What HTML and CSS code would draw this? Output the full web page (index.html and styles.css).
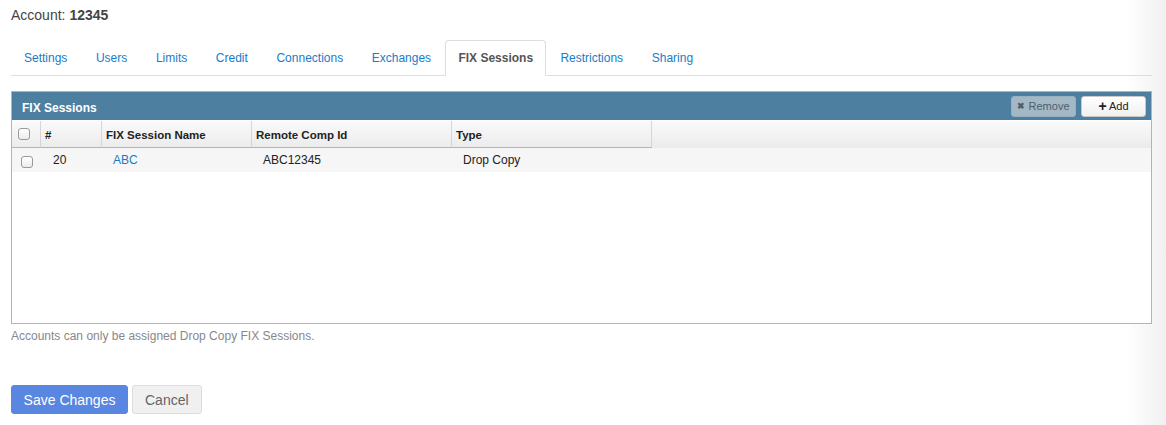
FILE: index.html
```html
<!DOCTYPE html>
<html lang="en">
<head>
    <meta charset="UTF-8">
    <title>Account 12345 - FIX Sessions</title>
    <link rel="stylesheet" href="styles.css">
</head>
<body>
    <div class="page">
        <h1 class="account">Account: <b>12345</b></h1>

        <ul class="tabs">
            <li><a href="#">Settings</a></li>
            <li><a href="#">Users</a></li>
            <li><a href="#">Limits</a></li>
            <li><a href="#">Credit</a></li>
            <li><a href="#">Connections</a></li>
            <li><a href="#">Exchanges</a></li>
            <li class="active"><a href="#">FIX Sessions</a></li>
            <li><a href="#">Restrictions</a></li>
            <li><a href="#">Sharing</a></li>
        </ul>

        <div class="panel">
            <div class="panel-head">
                <span class="panel-title">FIX Sessions</span>
                <div class="panel-tools">
                    <button class="tool-btn disabled"><span class="ico">&#10006;</span> Remove</button>
                    <button class="tool-btn"><span class="ico plus">+</span> Add</button>
                </div>
            </div>
            <div class="grid">
                <div class="grid-head">
                    <div class="cell c-check"><span class="check"></span></div>
                    <div class="cell c-num">#</div>
                    <div class="cell c-name">FIX Session Name</div>
                    <div class="cell c-comp">Remote Comp Id</div>
                    <div class="cell c-type">Type</div>
                </div>
                <div class="grid-row">
                    <div class="cell c-check"><span class="check"></span></div>
                    <div class="cell c-num">20</div>
                    <div class="cell c-name"><a href="#">ABC</a></div>
                    <div class="cell c-comp">ABC12345</div>
                    <div class="cell c-type">Drop Copy</div>
                </div>
            </div>
        </div>

        <p class="hint">Accounts can only be assigned Drop Copy FIX Sessions.</p>

        <div class="actions">
            <button class="btn primary">Save Changes</button>
            <button class="btn">Cancel</button>
        </div>
    </div>
</body>
</html>
```

FILE: styles.css
```css
* {
    margin: 0;
    padding: 0;
    box-sizing: border-box;
}

body {
    font-family: "Liberation Sans", Arial, sans-serif;
    color: #333;
    background: linear-gradient(to right, #fff 1126px, #f0f0f0 1166px);
    height: 425px;
    overflow: hidden;
}

.page {
    width: 1141px;
    margin-left: 11px;
}

a {
    color: #1a7bc9;
    text-decoration: none;
}

.account {
    font-size: 14px;
    font-weight: normal;
    color: #444;
    padding-top: 7px;
    line-height: 16px;
}

/* tabs */
.tabs {
    list-style: none;
    display: flex;
    margin-top: 17px;
    border-bottom: 1px solid #ddd;
    height: 36px;
    font-size: 12px;
}

.tabs li {
    margin-bottom: -1px;
}

.tabs a {
    display: block;
    height: 35px;
    line-height: 34px;
    padding: 0 13.3px;
    border: 1px solid transparent;
    border-radius: 4px 4px 0 0;
}

.tabs li:first-child a {
    padding-left: 12px;
}

.tabs .active a {
    color: #555;
    font-weight: bold;
    background: #fff;
    border-color: #ddd;
    border-bottom-color: #fff;
    height: 36px;
    padding: 0 12px;
}

/* panel */
.panel {
    margin-top: 15px;
    border: 1px solid #b3b3b3;
    height: 233px;
    background: #fff;
}

.panel-head {
    background: #4d7fa1;
    height: 28px;
    display: flex;
    align-items: center;
    justify-content: space-between;
    padding: 0 5px 0 10px;
}

.panel-title {
    color: #fff;
    font-size: 12px;
    font-weight: bold;
    padding-top: 4px;
}

.panel-tools {
    display: flex;
    gap: 5px;
}

.tool-btn {
    font-family: "Liberation Sans", Arial, sans-serif;
    font-size: 11px;
    color: #222;
    height: 21px;
    width: 65px;
    border: 1px solid #c8c8c8;
    border-radius: 3px;
    background: linear-gradient(#fff, #f0f0f0);
}

.tool-btn.disabled {
    background: #a3b8c6;
    border-color: #9ab0bf;
    color: #4e5e69;
}

.tool-btn .ico {
    font-size: 9px;
    font-weight: bold;
    vertical-align: 1px;
}

.tool-btn .ico.plus {
    font-size: 14px;
    vertical-align: -1px;
}

/* grid */
.grid {
    font-size: 12px;
    border-top: 1px solid #fff;
}

.grid-head {
    display: flex;
    height: 27px;
    background: linear-gradient(#fafafa, #ebebeb);
    font-weight: bold;
    color: #222;
    font-size: 11.5px;
}

.grid-head .cell {
    border-right: 1px solid #d6d6d6;
    border-bottom: 1px solid #b3b3b3;
    padding-left: 4px;
    line-height: 28px;
}

.grid-row {
    display: flex;
    height: 24px;
    background: #f6f6f6;
    line-height: 24px;
    color: #222;
}

.grid-row .cell {
    padding-left: 11px;
}

.cell.c-check { width: 29px; display: flex; align-items: center; }
.cell.c-num { width: 61px; }
.cell.c-name { width: 150px; }
.cell.c-comp { width: 200px; }
.cell.c-type { width: 200px; }

.grid-head .c-check { padding-left: 6px; }
.grid-row .c-check { padding-left: 9px; }
.grid-row .c-num { padding-left: 12px; }

.check {
    display: block;
    width: 12px;
    height: 12px;
    border: 1px solid #9a9a9a;
    border-radius: 3px;
    background: linear-gradient(#fff, #ececec);
}

.grid-row .check {
    margin-top: 3px;
}

.hint {
    font-size: 12px;
    color: #888;
    margin-top: 5px;
}

/* form buttons */
.actions {
    margin-top: 42px;
    display: flex;
    gap: 4px;
}

.btn {
    font-family: "Liberation Sans", Arial, sans-serif;
    font-size: 14px;
    height: 29px;
    padding: 0 12px;
    border-radius: 3px;
    border: 1px solid #ddd;
    background: #f0f0f0;
    color: #666;
    white-space: nowrap;
}

.btn.primary {
    background: #5886e1;
    border-color: #5886e1;
    color: #fff;
    width: 117px;
    padding: 0;
}
```
